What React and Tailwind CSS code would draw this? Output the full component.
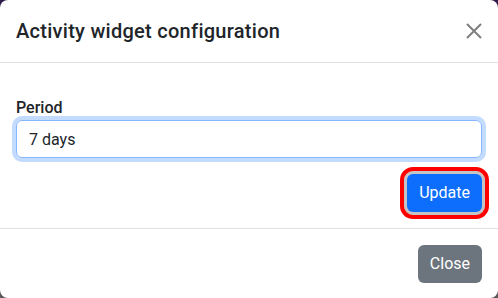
import { useState } from 'react';

export default function App() {
    const [period, setPeriod] = useState('7 days');

    return (
        <div className="w-[498px] h-[298px] bg-gradient-to-b from-[#2e1a4d] to-[#5a5a5a] font-['Roboto','Liberation_Sans',Arial,sans-serif] text-[#212529]">
            <div className="h-full bg-white rounded-[8px] flex flex-col">
                {/* header */}
                <div className="flex items-center justify-between p-4 border-b border-[#dee2e6]">
                    <h5 className="text-[20px] leading-[30px] font-medium tracking-[0.28px]">Activity widget configuration</h5>
                    <button className="w-4 h-4 opacity-50 text-black">
                        <svg viewBox="0 0 16 16" className="w-4 h-4" fill="none" stroke="currentColor" strokeWidth="2">
                            <path d="M1 1l14 14M15 1L1 15" />
                        </svg>
                    </button>
                </div>

                {/* body */}
                <div className="px-4 pt-[33px] pb-4 border-b border-[#dee2e6]">
                    <label className="block mb-0 text-[16px] leading-6 font-medium">Period</label>
                    <input
                        value={period}
                        onChange={e => setPeriod(e.target.value)}
                        className="block w-full h-[38px] px-3 text-[16px] leading-6 border border-[#86b7fe] rounded-[6px] outline-none shadow-[0_0_0_4px_rgba(13,110,253,0.25)]"
                    />
                    <div className="flex justify-end mt-4">
                        <button className="h-[38px] px-3 text-[16px] text-white bg-[#0d6efd] rounded-[6px] shadow-[0_0_0_3px_#c4c4c4] outline-4 outline-solid outline-[#ff0000] outline-offset-[3px]">
                            Update
                        </button>
                    </div>
                </div>

                {/* footer */}
                <div className="flex justify-end p-3">
                    <button className="m-1 h-[38px] px-3 text-[16px] text-white bg-[#6c757d] rounded-[6px]">
                        Close
                    </button>
                </div>
            </div>
        </div>
    );
}
